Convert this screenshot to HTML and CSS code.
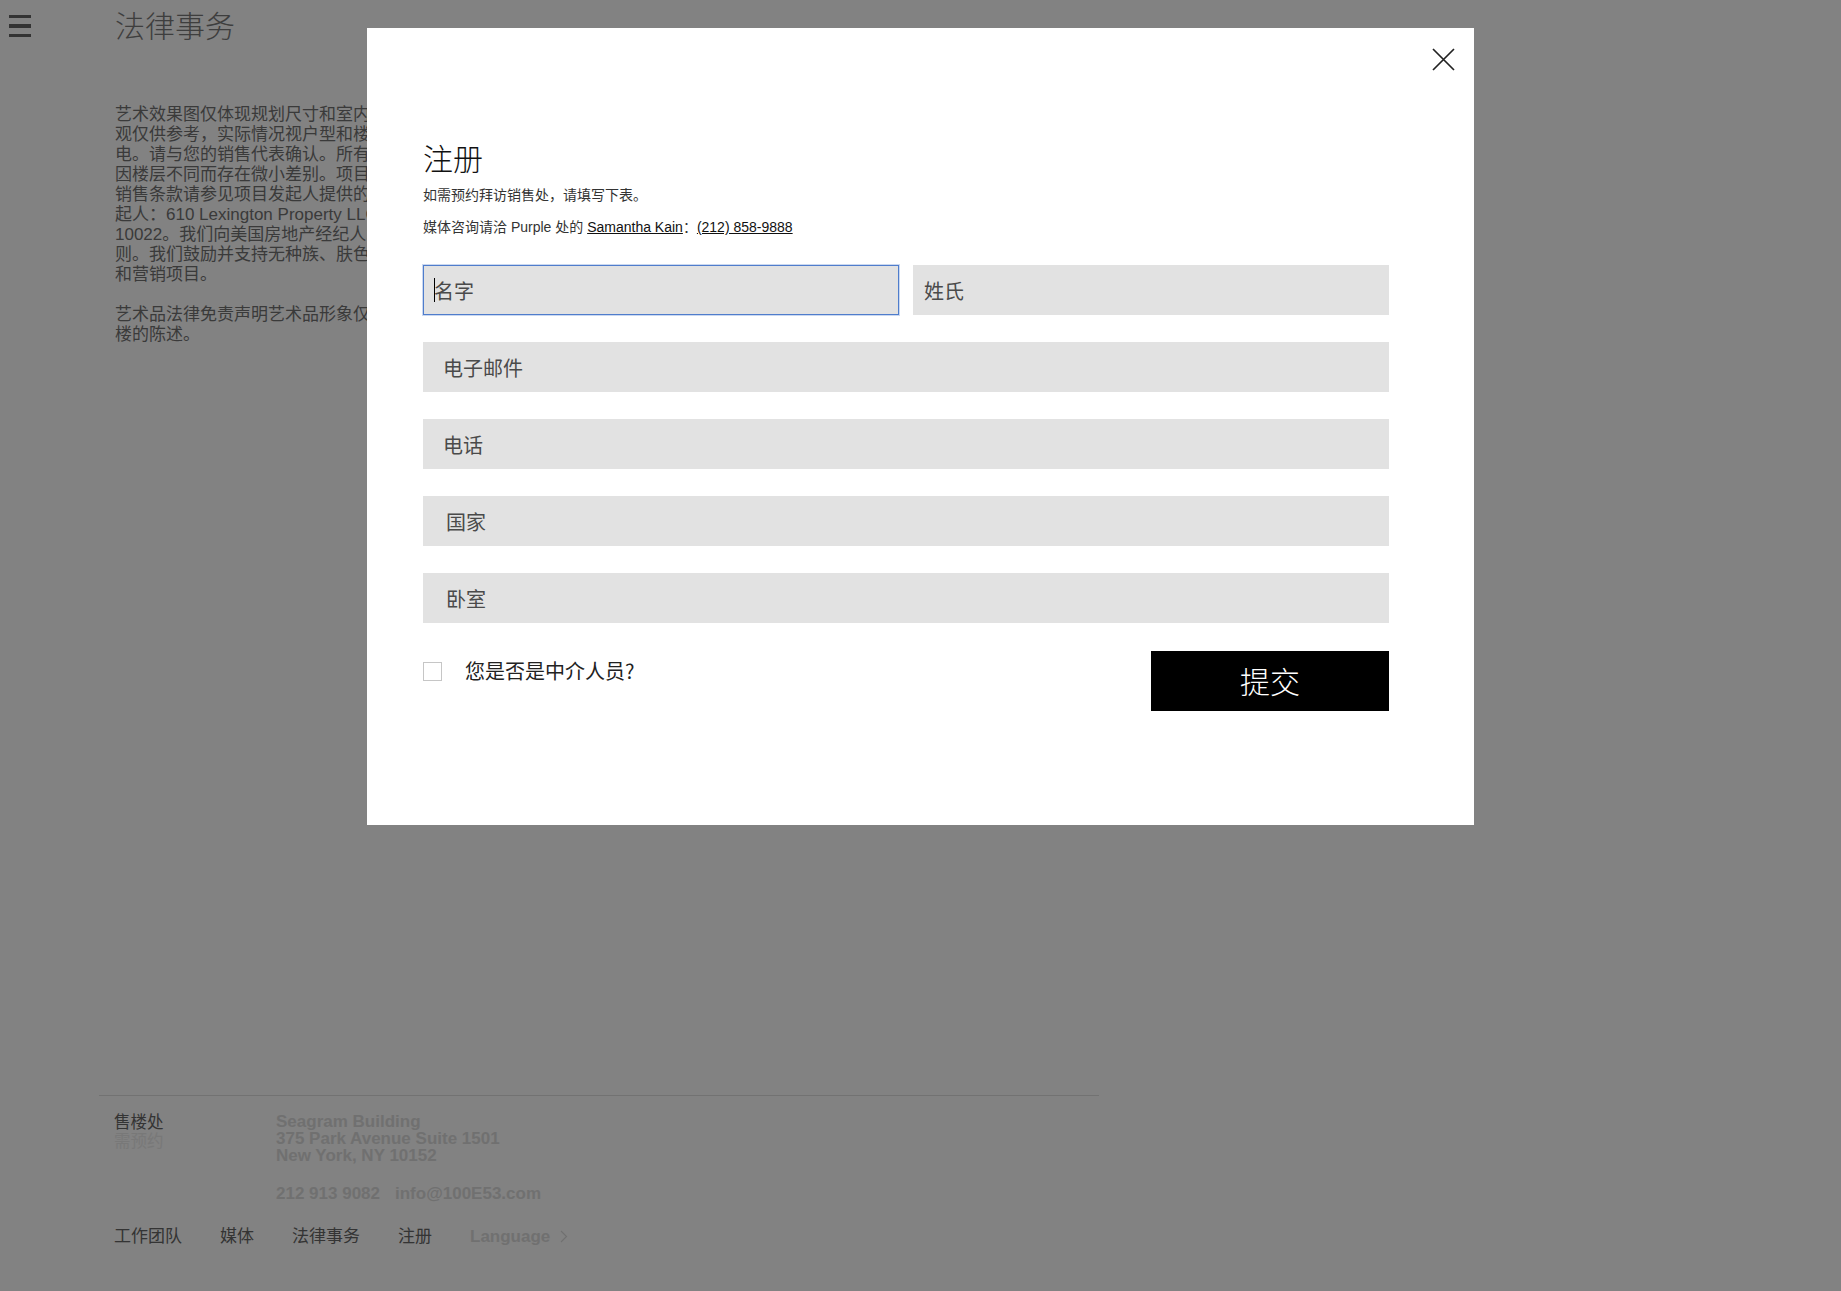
FILE: index.html
```html
<!DOCTYPE html>
<html lang="zh-CN">
<head>
<meta charset="utf-8">
<title>法律事务</title>
<link rel="stylesheet" href="styles.css">
</head>
<body>
<div class="page">
  <header class="topbar">
    <button class="menu-btn" type="button" aria-label="菜单"><span></span><span></span><span></span></button>
    <h1 class="page-title">法律事务</h1>
  </header>

  <main class="legal">
    <p class="legal-text">
      <span class="ln">艺术效果图仅体现规划尺寸和室内设</span>
      <span class="ln">观仅供参考，实际情况视户型和楼层</span>
      <span class="ln">电。请与您的销售代表确认。所有户</span>
      <span class="ln">因楼层不同而存在微小差别。项目规</span>
      <span class="ln">销售条款请参见项目发起人提供的发</span>
      <span class="ln">起人：610 Lexington Property LLC</span>
      <span class="ln">10022。我们向美国房地产经纪人承</span>
      <span class="ln">则。我们鼓励并支持无种族、肤色、宗</span>
      <span class="ln">和营销项目。</span>
    </p>
    <p class="legal-text">
      <span class="ln">艺术品法律免责声明艺术品形象仅作</span>
      <span class="ln">楼的陈述。</span>
    </p>
  </main>

  <footer class="site-footer">
    <div class="sales">
      <div class="sales-label">
        <div class="office">售楼处</div>
        <div class="hours">需预约</div>
      </div>
      <div class="sales-info">
        <div>Seagram Building</div>
        <div>375 Park Avenue Suite 1501</div>
        <div>New York, NY 10152</div>
        <div class="contact-line"><span class="phone">212 913 9082</span><span>info@100E53.com</span></div>
      </div>
    </div>
    <nav class="footer-nav">
      <a href="#">工作团队</a>
      <a href="#">媒体</a>
      <a href="#">法律事务</a>
      <a href="#">注册</a>
      <a href="#" class="lang">Language<svg class="chev" width="8" height="13" viewBox="0 0 8 13"><polyline points="1,1 6.5,6.5 1,12" fill="none" stroke="currentColor" stroke-width="1.2"/></svg></a>
    </nav>
  </footer>
</div>

<div class="backdrop"></div>

<div class="modal" role="dialog" aria-labelledby="reg-title">
  <button class="modal-close" type="button" aria-label="关闭">
    <svg width="23" height="23" viewBox="0 0 23 23"><path d="M1 1 L22 22 M22 1 L1 22" stroke="#222" stroke-width="1.7" fill="none"/></svg>
  </button>
  <h2 class="modal-title" id="reg-title">注册</h2>
  <p class="modal-sub">如需预约拜访销售处，请填写下表。</p>
  <p class="modal-media">媒体咨询请洽 Purple 处的 <a href="#">Samantha Kain</a>：<a href="#">(212) 858-9888</a></p>

  <form class="reg-form">
    <div class="row-2">
      <div class="field is-focused"><input type="text" placeholder="名字"></div>
      <div class="field inset-sm"><input type="text" placeholder="姓氏"></div>
    </div>
    <div class="field"><input type="email" placeholder="电子邮件"></div>
    <div class="field"><input type="tel" placeholder="电话"></div>
    <div class="field inset-lg"><input type="text" placeholder="国家"></div>
    <div class="field inset-lg"><input type="text" placeholder="卧室"></div>
    <div class="form-foot">
      <label class="broker"><input type="checkbox"><span>您是否是中介人员?</span></label>
      <button class="submit" type="button">提交</button>
    </div>
  </form>
</div>
</body>
</html>
```

FILE: styles.css
```css
* { box-sizing: border-box; }

html, body {
  margin: 0;
  padding: 0;
}

body {
  width: 1841px;
  height: 1291px;
  overflow: hidden;
  background: #ffffff;
  color: #737373;
  font-family: "Liberation Sans", "Noto Sans CJK SC", sans-serif;
}

.page {
  height: 1291px;
}

/* ---------- top bar ---------- */
.topbar {
  display: flex;
  align-items: flex-start;
  padding-top: 4px;
}

.menu-btn {
  display: flex;
  flex-direction: column;
  gap: 6px;
  width: 22px;
  margin: 11px 0 0 9px;
  padding: 0;
  border: 0;
  background: none;
}

.menu-btn span {
  display: block;
  height: 3.3px;
  background: #646464;
}

.page-title {
  margin: 0 0 0 84px;
  font-family: "Noto Sans CJK SC", sans-serif;
  font-size: 30px;
  line-height: 40px;
  font-weight: 300;
  color: #7a7a7a;
}

/* ---------- legal text ---------- */
.legal {
  margin-top: 61px;
  padding-left: 115px;
}

.legal-text {
  margin: 0 0 20px;
  font-size: 17px;
  line-height: 20px;
  white-space: nowrap;
  color: #737373;
}

.legal-text:last-child { margin-bottom: 0; }

.legal-text .ln { display: block; }

/* ---------- footer ---------- */
.site-footer {
  width: 1000px;
  margin: 750px 0 0 99px;
  padding: 16px 15px 0;
  border-top: 1px solid #e0e0e0;
}

.sales { display: flex; }

.sales-label {
  width: 162px;
  font-family: "Noto Sans CJK SC", sans-serif;
  font-size: 16.5px;
  line-height: 18.5px;
}

.sales-label .office { color: #666666; }
.sales-label .hours { color: #ececec; }

.sales-info {
  margin-top: 1px;
  font-family: "Liberation Sans", sans-serif;
  font-weight: 700;
  font-size: 17px;
  line-height: 17px;
  color: #dcdcdc;
}

.contact-line { margin-top: 21px; }
.contact-line .phone { margin-right: 15px; }

.footer-nav {
  display: flex;
  align-items: baseline;
  gap: 38px;
  margin-top: 23px;
  font-family: "Noto Sans CJK SC", sans-serif;
  font-size: 17px;
  line-height: 20px;
}

.footer-nav a {
  color: #666666;
  text-decoration: none;
}

.footer-nav .lang {
  font-family: "Liberation Sans", sans-serif;
  font-weight: 700;
  font-size: 17px;
  color: #dcdcdc;
}

.footer-nav .chev {
  margin-left: 10px;
  vertical-align: -1px;
}

/* ---------- modal ---------- */
.backdrop {
  position: fixed;
  inset: 0;
  background: rgba(0, 0, 0, 0.49);
}

.modal {
  position: fixed;
  top: 28px;
  left: 367px;
  width: 1107px;
  height: 797px;
  padding: 111px 85px 0 56px;
  background: #ffffff;
  font-family: "Noto Sans CJK SC", sans-serif;
}

.modal-close {
  position: absolute;
  top: 20px;
  right: 19px;
  width: 23px;
  height: 23px;
  padding: 0;
  border: 0;
  background: none;
}

.modal-close svg { display: block; }

.modal-title {
  margin: 0;
  font-size: 30px;
  line-height: 36px;
  font-weight: 300;
  color: #111111;
}

.modal-sub {
  margin: 9px 0 0;
  font-size: 14px;
  line-height: 20px;
  color: #333333;
}

.modal-media {
  margin: 13px 0 0;
  font-family: "Liberation Sans", "Noto Sans CJK SC", sans-serif;
  font-size: 14px;
  line-height: 20px;
  color: #333333;
}

.modal-media a {
  color: #111111;
  text-decoration: underline;
}

.reg-form {
  display: flex;
  flex-direction: column;
  gap: 27px;
  margin-top: 28px;
}

.row-2 {
  display: grid;
  grid-template-columns: 1fr 1fr;
  gap: 14px;
}

.field { position: relative; }

.field input {
  display: block;
  width: 100%;
  height: 50px;
  margin: 0;
  padding: 0 0 0 20px;
  border: 0;
  background: #e2e2e2;
  font-family: "Noto Sans CJK SC", sans-serif;
  font-size: 20px;
  color: #222222;
  outline: none;
}

.field input::placeholder { color: #4a4a4a; }

.field.inset-sm input { padding-left: 11px; }
.field.inset-lg input { padding-left: 23px; }

.field.is-focused input {
  padding-left: 10px;
  border: 1px solid #4f7dcc;
  box-shadow: 0 0 0 1px rgba(79, 125, 204, 0.3);
}

.field.is-focused::after {
  content: "";
  position: absolute;
  left: 11px;
  top: 13px;
  width: 1px;
  height: 24px;
  background: #000000;
}

.form-foot {
  display: flex;
  justify-content: space-between;
  align-items: flex-start;
  margin-top: 1px;
}

.broker {
  display: flex;
  align-items: center;
  gap: 23px;
  margin-top: 10px;
  font-size: 20px;
  line-height: 20px;
  color: #222222;
}

.broker input {
  appearance: none;
  -webkit-appearance: none;
  width: 19px;
  height: 19px;
  margin: 0;
  border: 1px solid #c6c6c6;
  background: #ffffff;
}

.submit {
  width: 238px;
  height: 60px;
  padding: 0 0 3px;
  border: 0;
  background: #000000;
  color: #ffffff;
  font-family: "Noto Sans CJK SC", sans-serif;
  font-size: 30px;
  font-weight: 300;
  line-height: 1;
}
```
